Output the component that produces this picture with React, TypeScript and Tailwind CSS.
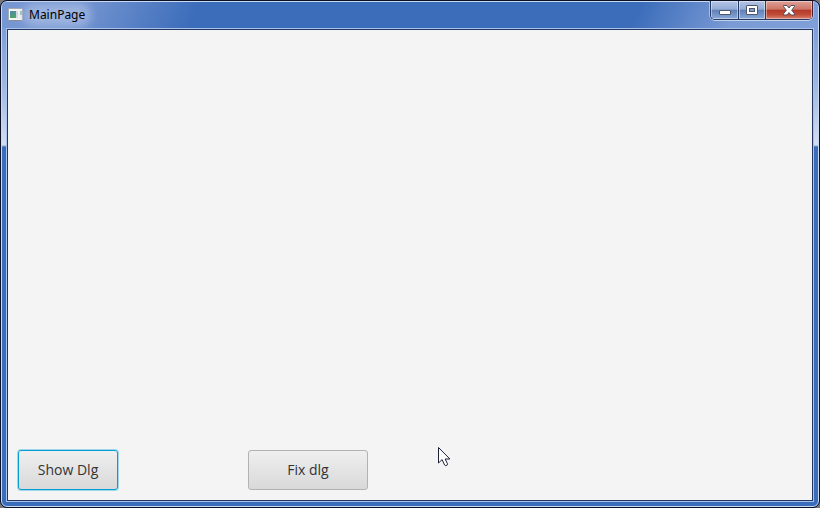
import type { ReactNode } from 'react'

const captionButton =
  'flex items-center justify-center border-r border-[#26395f] shadow-[inset_0_0_0_1px_rgba(255,255,255,0.45)]'

function AppIcon() {
  return (
    <svg width="16" height="14" viewBox="0 0 16 14" aria-hidden="true">
      <defs>
        <linearGradient id="screen" x1="0" y1="0" x2="0.6" y2="1">
          <stop offset="0" stopColor="#4f86b8" />
          <stop offset="1" stopColor="#4da563" />
        </linearGradient>
      </defs>
      <rect x="0.5" y="0.5" width="14" height="12" rx="1" fill="#f5f6f6" stroke="#a4a9b0" />
      <rect x="2" y="3" width="6" height="7" fill="url(#screen)" />
      <rect x="8" y="3" width="2" height="7" fill="#cfdcdf" />
      <rect x="12" y="3" width="2" height="4" fill="#9fc4b8" />
      <path d="M1 12.5h13" stroke="#8f8d8f" />
    </svg>
  )
}

function Caption() {
  return (
    <div className="flex h-[19px] w-[103px] shrink-0 overflow-hidden rounded-b-[5px] border-b border-l border-[#26395f] shadow-[0_1px_0_0_#c3d3ee,-1px_0_0_0_#a9bfe6,1px_0_0_0_#a9bfe6]">
      <button
        type="button"
        aria-label="Minimize"
        className={`${captionButton} w-7 bg-[linear-gradient(#b4c5e4_0%,#93abd6_46%,#5f7fb7_50%,#89a9da_100%)]`}
      >
        <svg width="12" height="12" viewBox="0 0 12 12">
          <rect x="0.5" y="6.5" width="11" height="4" rx="0.5" fill="#fff" stroke="#50566a" />
        </svg>
      </button>
      <button
        type="button"
        aria-label="Maximize"
        className={`${captionButton} w-[27px] bg-[linear-gradient(#b4c5e4_0%,#93abd6_46%,#5f7fb7_50%,#89a9da_100%)]`}
      >
        <svg width="12" height="10" viewBox="0 0 12 10">
          <rect x="0.5" y="0.5" width="11" height="9" rx="0.5" fill="#fff" stroke="#50566a" />
          <rect x="3.5" y="3.5" width="5" height="3" fill="#7f9dce" stroke="#50566a" />
        </svg>
      </button>
      <button
        type="button"
        aria-label="Close"
        className="flex flex-1 items-center justify-center border-r border-[#4a2030] bg-[linear-gradient(#dfa197_0%,#cd7466_46%,#b23a29_50%,#c04a38_75%,#d98272_100%)] shadow-[inset_0_0_0_1px_rgba(255,255,255,0.4)]"
      >
        <svg width="12" height="11" viewBox="0 0 12 11">
          <path
            d="M.5.5h3.500L6 3 8 .5h3.500v1L8.700 5.200l2.800 3.600v1.200H8L6 7.600 4 10H.5V8.800l2.800-3.600L.5 1.500z"
            fill="#fff"
            stroke="#54505e"
          />
        </svg>
      </button>
    </div>
  )
}

function DialogButton({ children, className }: { children: ReactNode; className: string }) {
  return (
    <button
      type="button"
      className={`h-10 rounded-[3px] border bg-linear-to-b from-[#efefef] to-[#d9d9d9] text-sm text-[#333] ${className}`}
    >
      {children}
    </button>
  )
}

function Pointer() {
  return (
    <svg
      className="pointer-events-none absolute bottom-[33px] left-[430px]"
      width="13"
      height="20"
      viewBox="0 0 13 20"
      aria-hidden="true"
    >
      <path
        d="M.5.5v15.500l3.600-3.400 2.500 5.400 1.200.700 1.700-1-.1-1.200-2.300-4.500h4.800z"
        fill="#fff"
        stroke="#1c2038"
      />
    </svg>
  )
}

export default function App() {
  return (
    <div className="h-screen bg-[#77777a] font-['Open_Sans','Noto_Sans',sans-serif]">
      <div className="h-full overflow-hidden rounded-[7px] border border-[#0b1024] bg-[#3c6dba]">
        <div className="flex h-full flex-col rounded-[6px] border border-[#c9daf3] bg-[linear-gradient(#7f9fd8_0px,#809fd8_28px,#9db5e1_80px,#d5def1_143px,#3c6dba_145px)]">
          <header className="flex h-[26px] shrink-0 items-start justify-between rounded-t-[5px] bg-[linear-gradient(115deg,#7797d2_0px,#7797d2_70px,#3c6dba_180px,#3c6dba_calc(100%-170px),#7b9bd5_calc(100%-80px),#7f9fd8_100%)] pl-[6px]">
            <div className="flex h-full items-center gap-[5px]">
              <AppIcon />
              <h1 className="rounded-full bg-[#a9bde4]/70 font-['Noto_Sans','Open_Sans',sans-serif] text-xs leading-3 text-black shadow-[0_0_8px_6px_rgba(169,189,228,0.7)]">
                MainPage
              </h1>
            </div>
            <div className="-mt-px pr-[5px]">
              <Caption />
            </div>
          </header>
          <div className="mx-1 mb-1 flex min-h-0 flex-1 border border-[#a9c3ec]">
            <main className="relative flex flex-1 items-end border border-[#22365f] bg-[#f4f4f4] px-[10px] pb-[10px]">
              <DialogButton className="w-[100px] border-[#039ed3] shadow-[0_0_0_1px_rgba(3,158,211,0.35)]">
                Show Dlg
              </DialogButton>
              <DialogButton className="ml-[130px] w-[120px] border-[#b2b2b2]">Fix dlg</DialogButton>
              <Pointer />
            </main>
          </div>
        </div>
      </div>
    </div>
  )
}
